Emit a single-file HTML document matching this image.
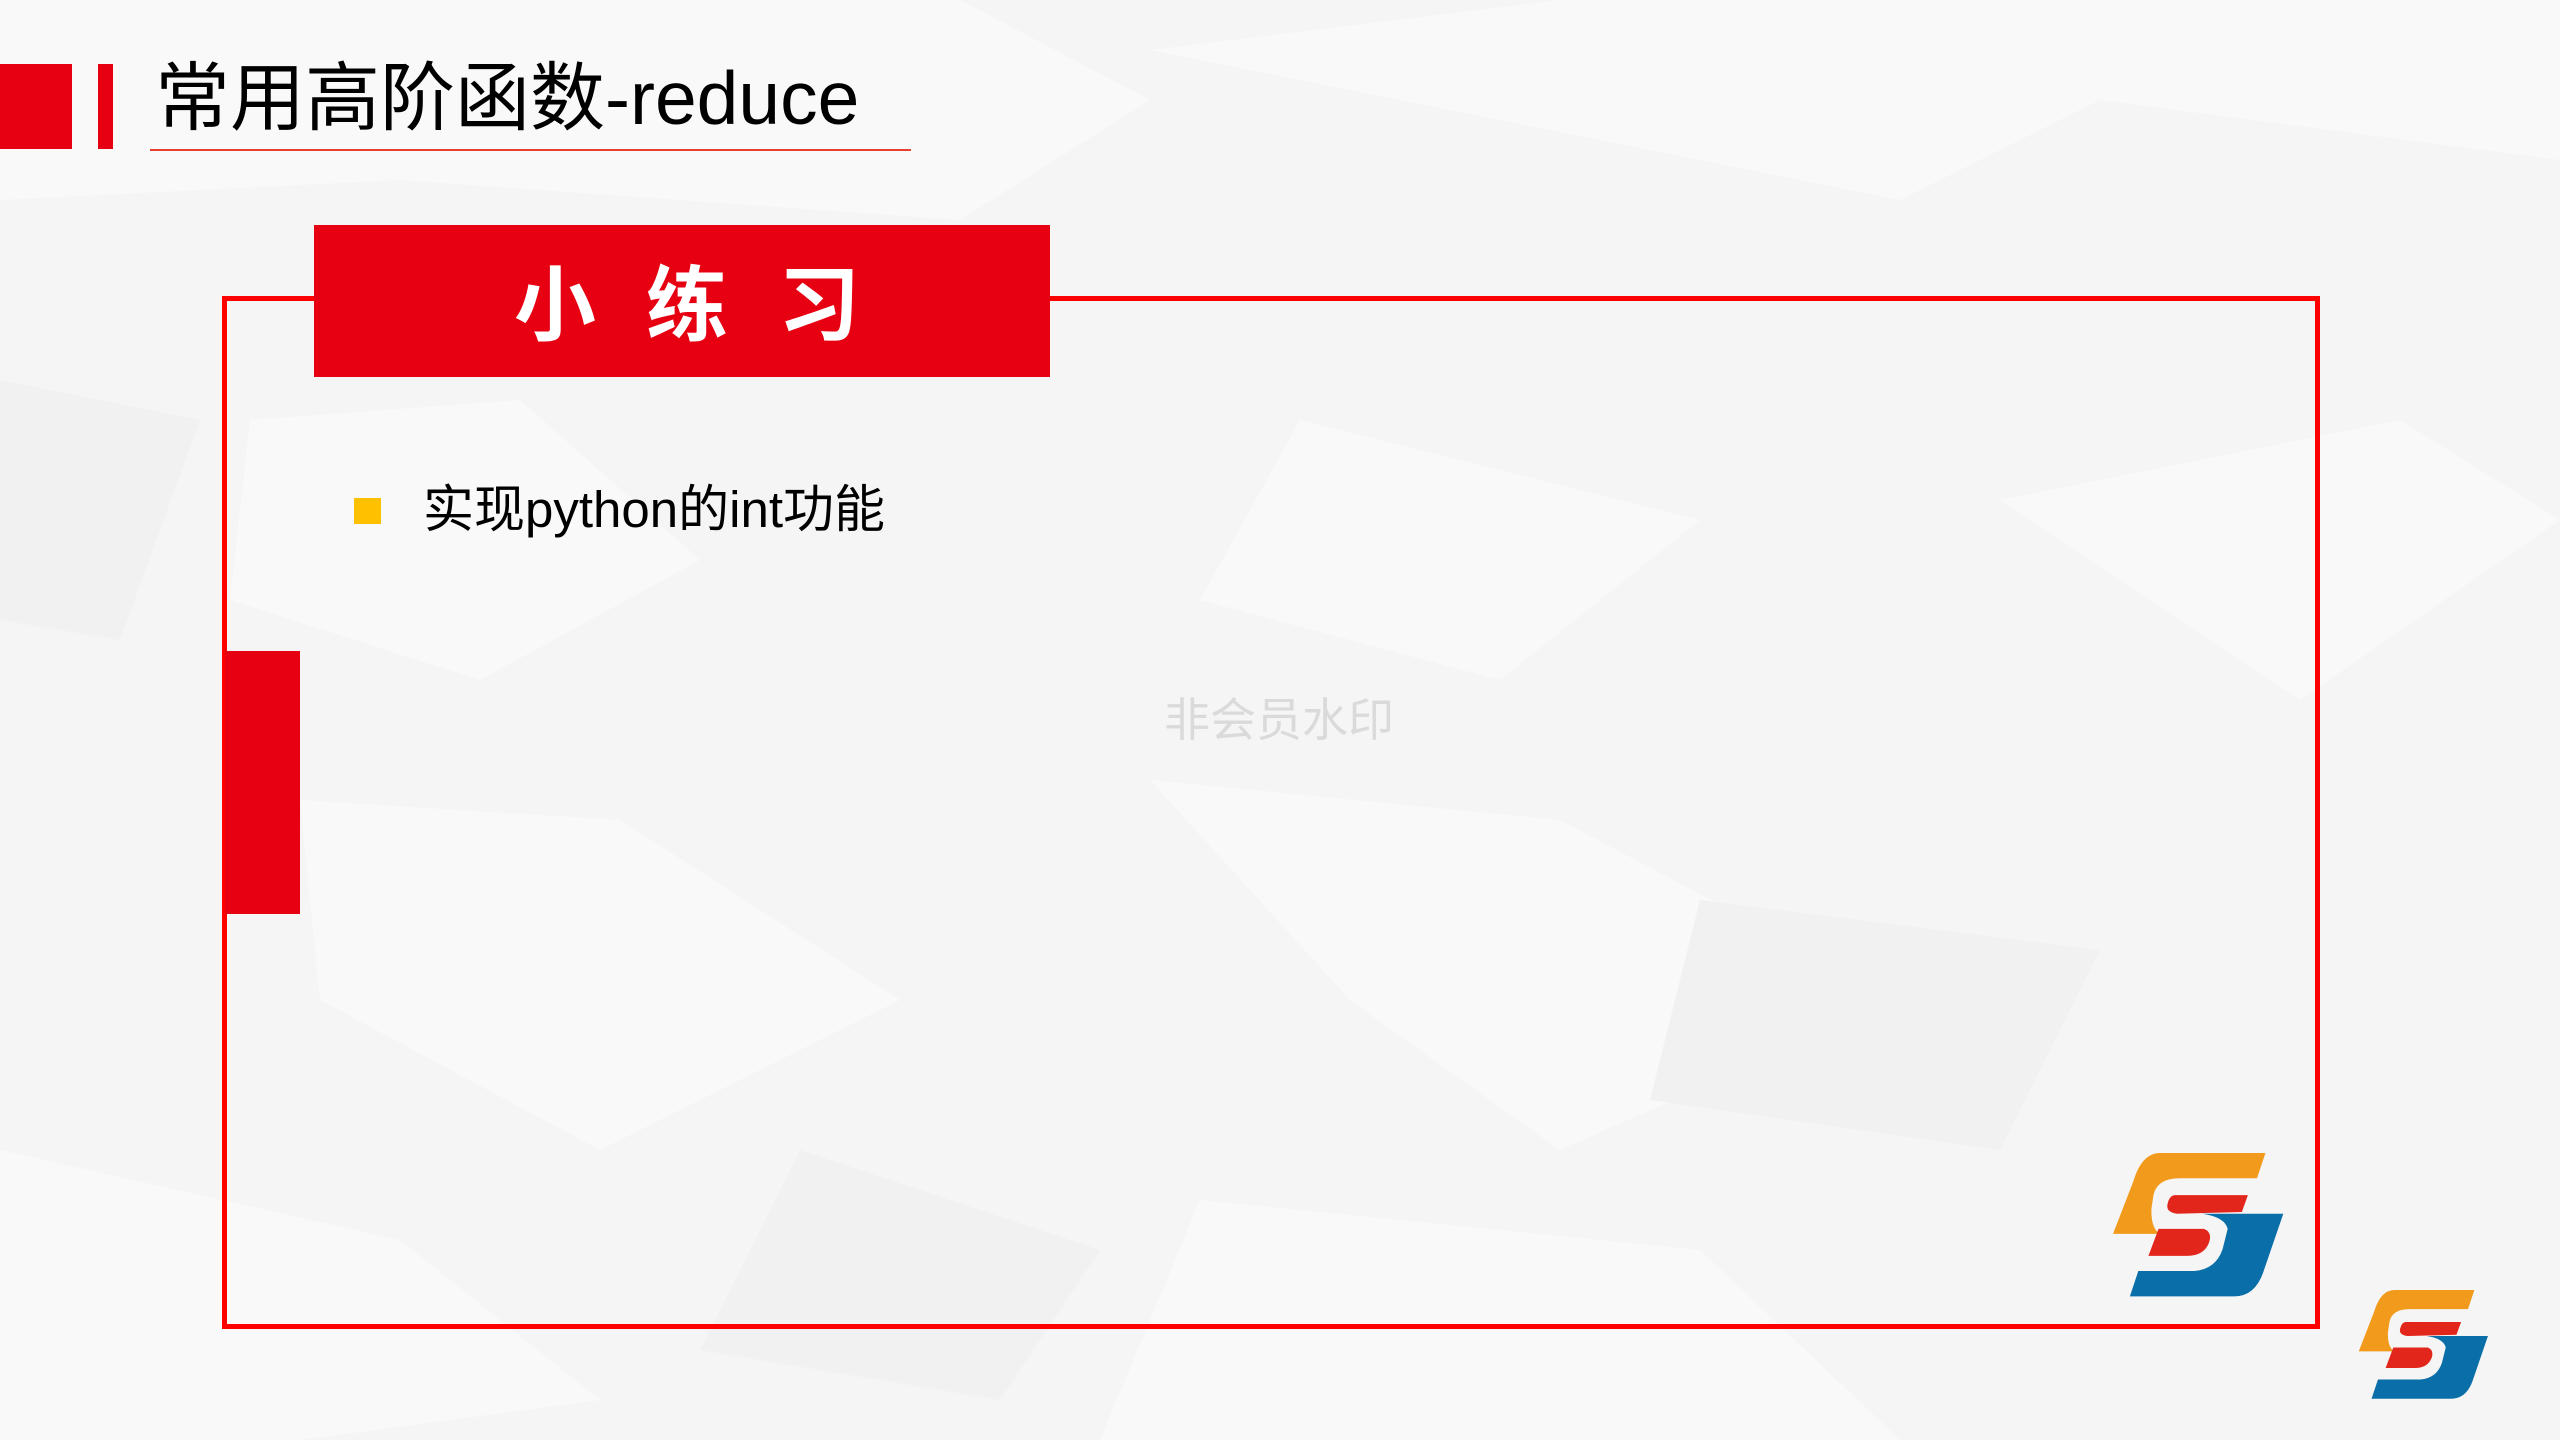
<!DOCTYPE html>
<html><head><meta charset="utf-8"><style>
html,body{margin:0;padding:0}
body{width:2560px;height:1440px;position:relative;overflow:hidden;background:#f5f5f5;font-family:"Liberation Sans","Noto Sans CJK SC",sans-serif}
.a{position:absolute}
</style></head><body>
<svg class="a" style="left:0;top:0" width="2560" height="1440">
<g fill="#f9f9f9">
<polygon points="0,0 960,0 1150,100 960,220 400,180 0,200"/>
<polygon points="1150,50 1560,0 2560,0 2560,160 2100,100 1900,200"/>
<polygon points="250,420 520,400 700,560 480,680 230,600"/>
<polygon points="1300,420 1700,520 1500,680 1200,600"/>
<polygon points="2000,500 2400,420 2560,520 2300,700"/>
<polygon points="300,800 620,820 900,1000 600,1150 320,1000"/>
<polygon points="1150,780 1560,820 1900,1000 1560,1150 1350,1000"/>
<polygon points="0,1150 400,1240 600,1400 300,1440 0,1440"/>
<polygon points="1200,1200 1700,1250 1900,1440 1100,1440"/>
</g>
<g fill="#f1f1f1">
<polygon points="0,380 200,420 120,640 0,620"/>
<polygon points="1700,900 2100,950 2000,1150 1650,1100"/>
<polygon points="800,1150 1100,1250 1000,1400 700,1350"/>
</g>
</svg>
<div class="a" style="left:0;top:64px;width:72px;height:85px;background:#e60012"></div>
<div class="a" style="left:98px;top:64px;width:15px;height:85px;background:#e60012"></div>
<div class="a" style="left:155px;top:48px;font-size:75px;line-height:100px;color:#000;white-space:nowrap">常用高阶函数-reduce</div>
<div class="a" style="left:150px;top:149px;width:761px;height:2px;background:#e8402e"></div>
<div class="a" style="left:222px;top:296px;width:2088px;height:1023px;border:5px solid #ff0000"></div>
<div class="a" style="left:314px;top:225px;width:736px;height:152px;background:#e60012"></div>
<div class="a" style="left:514px;top:257px;font-size:82px;line-height:100px;font-weight:bold;color:#fff;letter-spacing:50px;white-space:nowrap">小练习</div>
<div class="a" style="left:225px;top:651px;width:75px;height:263px;background:#e60012"></div>
<div class="a" style="left:354px;top:498px;width:27px;height:26px;background:#ffc000"></div>
<div class="a" style="left:423px;top:477px;font-size:51px;line-height:66px;color:#000;white-space:nowrap">实现python的int功能</div>
<div class="a" style="left:1164px;top:690px;font-size:46px;line-height:60px;color:#dadada;white-space:nowrap">非会员水印</div>
<svg class="a" style="left:2113px;top:1153px" width="172" height="145" viewBox="100 75 510 430">
<path d="M240,75 L552,75 L527,150 L300,150 Q230,150 220,200 L214,240 Q212,300 240,315 L100,315 L160,160 Q185,75 240,75 Z" fill="#f29a1c"/>
<path d="M285,200 L500,200 L482,250 L290,255 Q255,250 262,225 Q268,200 285,200 Z" fill="#e3261c"/>
<path d="M235,300 L370,300 Q395,310 385,340 Q370,380 320,380 L205,380 Z" fill="#e3261c"/>
<path d="M365,255 L605,255 L545,430 Q520,500 460,500 L150,500 L175,425 L340,425 Q405,420 425,360 L440,300 Q432,265 365,255 Z" fill="#0a6ea8"/>
</svg>
<svg class="a" style="left:2358px;top:1290px" width="132" height="110" viewBox="100 75 510 430">
<path d="M240,75 L552,75 L527,150 L300,150 Q230,150 220,200 L214,240 Q212,300 240,315 L100,315 L160,160 Q185,75 240,75 Z" fill="#f29a1c"/>
<path d="M285,200 L500,200 L482,250 L290,255 Q255,250 262,225 Q268,200 285,200 Z" fill="#e3261c"/>
<path d="M235,300 L370,300 Q395,310 385,340 Q370,380 320,380 L205,380 Z" fill="#e3261c"/>
<path d="M365,255 L605,255 L545,430 Q520,500 460,500 L150,500 L175,425 L340,425 Q405,420 425,360 L440,300 Q432,265 365,255 Z" fill="#0a6ea8"/>
</svg>
</body></html>
